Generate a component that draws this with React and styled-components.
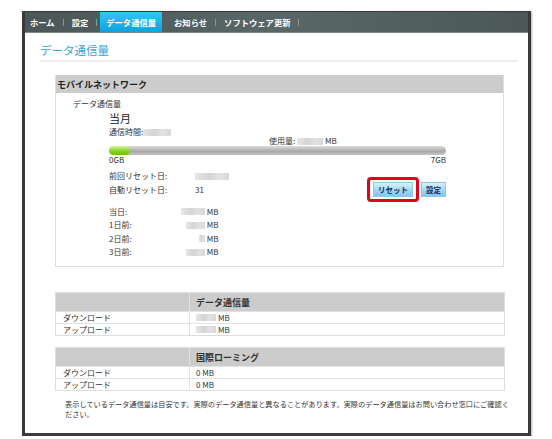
import styled, { createGlobalStyle } from "styled-components";

const Global = createGlobalStyle`
  body {
    margin: 0;
    background: #fff;
    font-family: "Noto Sans CJK JP", "Liberation Sans", sans-serif;
    color: #333;
  }
`;

const Frame = styled.div`
  margin: 11px 0 0 22px;
  width: 503px;
  height: 421px;
  border: 3px solid #3a3a3a;
  border-top: 1px solid #3a3a3a;
  background: #fff;
  box-shadow: 1px 1px 2px rgba(0, 0, 0, 0.3);
  display: flex;
  flex-direction: column;
`;

const Nav = styled.div`
  height: 20px;
  display: flex;
  align-items: stretch;
  background: linear-gradient(90deg, #4b5656 0%, #5a6767 50%, #4c5858 100%);
  border-bottom: 1px solid #7d8a8a;
`;

const TabWrap = styled.div`
  display: flex;
`;

const Tab = styled.div`
  display: flex;
  align-items: center;
  padding: 0 ${(p) => (p.$active ? 6 : 5)}px;
  font-size: 8.3px;
  font-weight: bold;
  color: #fff;
  background: ${(p) => (p.$active ? "linear-gradient(#36c6f4, #0ba2dd)" : "transparent")};
  white-space: nowrap;
`;

const Sep = styled.div`
  display: flex;
  align-items: center;
  &::after {
    content: "";
    width: 1px;
    height: 7px;
    background: ${(p) => (p.$hidden ? "transparent" : "#8a9696")};
    margin: 0 3px;
  }
`;

const Content = styled.div`
  padding: 10px 9px 0 15px;
  flex: 1;
  display: flex;
  flex-direction: column;
`;

const Title = styled.div`
  font-size: 11.5px;
  line-height: 14px;
  color: #3aa6d8;
  padding-bottom: 3px;
  border-bottom: 2px solid #eeeeee;
  width: 478px;
`;

const Panel = styled.div`
  margin: 13px 0 0 15px;
  width: 447px;
  border: 1px solid #dddddd;
  border-top: none;
`;

const PanelHead = styled.div`
  height: 18px;
  background: #cccccc;
  font-size: 9px;
  font-weight: bold;
  color: #222;
  display: flex;
  align-items: center;
  padding-left: 1px;
`;

const PanelBody = styled.div`
  padding: 6px 0 0 17px;
  height: 167px;
  font-size: 8px;
`;

const Small = styled.div`
  font-size: 8px;
  line-height: 10px;
  color: #333;
`;

const Inner = styled.div`
  margin-left: 36px;
  width: 337px;
`;

const Month = styled.div`
  font-size: 11px;
  line-height: 14px;
  margin-top: 2px;
  color: #222;
`;

const Line = styled.div`
  display: flex;
  align-items: center;
  font-size: 8px;
  line-height: 10px;
  height: ${(p) => p.$h || 10}px;
  margin-top: ${(p) => p.$mt || 0}px;
  padding-left: ${(p) => p.$pl || 0}px;
`;

const Blur = styled.span`
  display: inline-block;
  width: ${(p) => p.$w}px;
  height: 7px;
  margin-left: ${(p) => p.$ml || 0}px;
  background: linear-gradient(90deg, #e6e6e6, #d4d4d4 40%, #e2e2e2 70%, #d8d8d8);
  filter: blur(0.6px);
`;

const Bar = styled.div`
  height: 9px;
  border-radius: 5px;
  background: linear-gradient(#dcdcdc, #a9a9a9 60%, #c4c4c4);
`;

const Fill = styled.div`
  height: 9px;
  width: 21px;
  border-radius: 5px;
  background: linear-gradient(#d6f79a, #88d21e 55%, #6fbf10);
`;

const Scale = styled.div`
  display: flex;
  justify-content: space-between;
  font-size: 8px;
  line-height: 10px;
`;

const Label = styled.span`
  width: ${(p) => p.$w || 86}px;
  flex-shrink: 0;
`;

const ResetRow = styled.div`
  display: flex;
  align-items: flex-start;
  margin-top: 6px;
`;

const ResetInfo = styled.div`
  flex: 1;
`;

const Buttons = styled.div`
  display: flex;
  align-items: center;
  gap: 2px;
  margin-top: 6px;
`;

const Highlight = styled.div`
  border: 3px solid #e2001a;
  border-radius: 4px;
  padding: 2px 3px;
`;

const Btn = styled.div`
  height: 13px;
  padding: 0 ${(p) => p.$px || 6}px;
  display: flex;
  align-items: center;
  font-size: 7.5px;
  font-weight: bold;
  color: #1a2a5a;
  background: linear-gradient(#d8f0fc, #9fd8f4 55%, #7ccaf0);
  border: 1px solid #8fc6e4;
`;

const Days = styled.div`
  margin-top: 3px;
`;

const DayValue = styled.span`
  width: 24px;
  display: flex;
  justify-content: flex-end;
  align-items: center;
`;

const Table = styled.div`
  margin: ${(p) => p.$mt}px 0 0 15px;
  width: 448px;
  border: 1px solid #dddddd;
  font-size: 8px;
`;

const TRow = styled.div`
  display: grid;
  grid-template-columns: 133px 1fr;
  height: ${(p) => (p.$head ? 18 : 11)}px;
  background: ${(p) => (p.$head ? "#cccccc" : "#fff")};
  border-top: ${(p) => (p.$first ? "none" : "1px solid #e2e2e2")};
`;

const Cell = styled.div`
  display: flex;
  align-items: center;
  padding-left: ${(p) => (p.$first ? 7 : 6)}px;
  border-left: ${(p) => (p.$first ? "none" : "1px solid #e2e2e2")};
  font-weight: ${(p) => (p.$bold ? "bold" : "normal")};
  font-size: ${(p) => (p.$bold ? 9 : 8)}px;
  color: #333;
  gap: 2px;
`;

const Note = styled.div`
  margin: 8px 0 0 25px;
  width: 445px;
  font-size: 7.2px;
  line-height: 10px;
  color: #333;
`;

const tabs = ["ホーム", "設定", "データ通信量", "お知らせ", "ソフトウェア更新"];

const days = [
  ["当日:", 24],
  ["1日前:", 19],
  ["2日前:", 6],
  ["3日前:", 19],
];

export default function App() {
  return (
    <>
      <Global />
      <Frame>
        <Nav>
          {tabs.map((t, i) => (
            <TabWrap key={t}>
              <Tab $active={i === 2}>{t}</Tab>
              <Sep $hidden={i === 2} />
            </TabWrap>
          ))}
        </Nav>
        <Content>
          <Title>データ通信量</Title>
          <Panel>
            <PanelHead>モバイルネットワーク</PanelHead>
            <PanelBody>
              <Small>データ通信量</Small>
              <Inner>
                <Month>当月</Month>
                <Line $mt={2}>
                  通信時間:<Blur $w={28} />
                </Line>
                <Line $mt={-1} $pl={160}>
                  使用量:<Blur $w={26} $ml={2} />&nbsp;MB
                </Line>
                <Bar>
                  <Fill />
                </Bar>
                <Scale>
                  <span>0GB</span>
                  <span>7GB</span>
                </Scale>
                <ResetRow>
                  <ResetInfo>
                    <Line>
                      <Label>前回リセット日:</Label>
                      <Blur $w={34} />
                    </Line>
                    <Line $mt={4}>
                      <Label>自動リセット日:</Label>
                      31
                    </Line>
                  </ResetInfo>
                  <Buttons>
                    <Highlight>
                      <Btn $px={4}>リセット</Btn>
                    </Highlight>
                    <Btn $px={4}>設定</Btn>
                  </Buttons>
                </ResetRow>
                <Days>
                  {days.map(([d, w]) => (
                    <Line key={d} $h={13.5}>
                      <Label $w={72}>{d}</Label>
                      <DayValue>
                        <Blur $w={w} />
                      </DayValue>
                      &nbsp;MB
                    </Line>
                  ))}
                </Days>
              </Inner>
            </PanelBody>
          </Panel>

          <Table $mt={25}>
            <TRow $head $first>
              <Cell $first />
              <Cell $bold>データ通信量</Cell>
            </TRow>
            <TRow>
              <Cell $first>ダウンロード</Cell>
              <Cell>
                <Blur $w={20} /> MB
              </Cell>
            </TRow>
            <TRow>
              <Cell $first>アップロード</Cell>
              <Cell>
                <Blur $w={20} />MB
              </Cell>
            </TRow>
          </Table>

          <Table $mt={11}>
            <TRow $head $first>
              <Cell $first />
              <Cell $bold>国際ローミング</Cell>
            </TRow>
            <TRow>
              <Cell $first>ダウンロード</Cell>
              <Cell>0 MB</Cell>
            </TRow>
            <TRow>
              <Cell $first>アップロード</Cell>
              <Cell>0 MB</Cell>
            </TRow>
          </Table>

          <Note>
            表示しているデータ通信量は目安です。実際のデータ通信量と異なることがあります。実際のデータ通信量はお問い合わせ窓口にご確認ください。
          </Note>
        </Content>
      </Frame>
    </>
  );
}
